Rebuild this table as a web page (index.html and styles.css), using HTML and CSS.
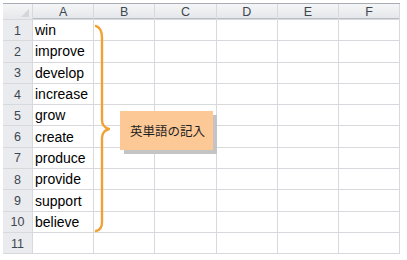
FILE: index.html
```html
<!DOCTYPE html>
<html lang="ja">
<head>
<meta charset="utf-8">
<link rel="stylesheet" href="styles.css">
</head>
<body>
<div class="wrap">
  <div class="sheet">
    <div class="corner"><span class="tri"></span></div>
    <div class="colh">A</div><div class="colh">B</div><div class="colh">C</div><div class="colh">D</div><div class="colh">E</div><div class="colh">F</div>

    <div class="rowh">1</div><div class="cell">win</div><div class="cell"></div><div class="cell"></div><div class="cell"></div><div class="cell"></div><div class="cell"></div>
    <div class="rowh">2</div><div class="cell">improve</div><div class="cell"></div><div class="cell"></div><div class="cell"></div><div class="cell"></div><div class="cell"></div>
    <div class="rowh">3</div><div class="cell">develop</div><div class="cell"></div><div class="cell"></div><div class="cell"></div><div class="cell"></div><div class="cell"></div>
    <div class="rowh">4</div><div class="cell">increase</div><div class="cell"></div><div class="cell"></div><div class="cell"></div><div class="cell"></div><div class="cell"></div>
    <div class="rowh">5</div><div class="cell">grow</div><div class="cell"></div><div class="cell"></div><div class="cell"></div><div class="cell"></div><div class="cell"></div>
    <div class="rowh">6</div><div class="cell">create</div><div class="cell"></div><div class="cell"></div><div class="cell"></div><div class="cell"></div><div class="cell"></div>
    <div class="rowh">7</div><div class="cell">produce</div><div class="cell"></div><div class="cell"></div><div class="cell"></div><div class="cell"></div><div class="cell"></div>
    <div class="rowh">8</div><div class="cell">provide</div><div class="cell"></div><div class="cell"></div><div class="cell"></div><div class="cell"></div><div class="cell"></div>
    <div class="rowh">9</div><div class="cell">support</div><div class="cell"></div><div class="cell"></div><div class="cell"></div><div class="cell"></div><div class="cell"></div>
    <div class="rowh">10</div><div class="cell">believe</div><div class="cell"></div><div class="cell"></div><div class="cell"></div><div class="cell"></div><div class="cell"></div>
    <div class="rowh">11</div><div class="cell"></div><div class="cell"></div><div class="cell"></div><div class="cell"></div><div class="cell"></div><div class="cell"></div>
  </div>

  <svg class="brace" width="20" height="214" viewBox="90 22 20 214">
    <path d="M96 26 Q102 28 102 38 L102 120 Q102 127 109 129 Q102 131 102 138 L102 222 Q102 230 96 231" fill="none" stroke="#F0A334" stroke-width="2.4" stroke-linecap="round" stroke-linejoin="round"/>
  </svg>

  <div class="note">英単語の記入</div>
</div>
</body>
</html>
```

FILE: styles.css
```css
html, body {
  margin: 0;
  padding: 0;
  background: #ffffff;
}

.wrap {
  position: relative;
  width: 407px;
  height: 260px;
  overflow: hidden;
}

.sheet {
  margin: 3px 0 0 3px;
  width: 397px;
  display: grid;
  grid-template-columns: 29px repeat(6, 60.2px);
  grid-template-rows: 15px repeat(11, 20.3px);
  gap: 1px;
  background: #d7d9dc;
  border-top: 1px solid #a9adb3;
  border-bottom: 1px solid #d7d9dc;
  font-family: "Liberation Sans", Arial, sans-serif;
}

.corner {
  position: relative;
  background: linear-gradient(#f4f5f6, #e6e8eb);
}

.tri {
  position: absolute;
  right: 3px;
  bottom: 2px;
  width: 0;
  height: 0;
  border-left: 8px solid transparent;
  border-bottom: 8px solid #d3d6da;
}

.colh {
  background: linear-gradient(#f4f5f6, #e4e7ea);
  color: #3e4650;
  font-size: 12.5px;
  display: flex;
  align-items: center;
  justify-content: center;
  box-shadow: inset 0 -1px 0 #b9bec5;
}

.rowh {
  background: #e9ebee;
  color: #3e4650;
  font-size: 12.5px;
  display: flex;
  align-items: center;
  justify-content: center;
  padding-top: 1px;
}

.cell {
  background: #ffffff;
  color: #000000;
  font-size: 14px;
  display: flex;
  align-items: center;
  padding-left: 2px;
  white-space: nowrap;
}

.brace {
  position: absolute;
  left: 90px;
  top: 22px;
}

.note {
  position: absolute;
  left: 120px;
  top: 111px;
  width: 93px;
  height: 39px;
  background: #fcc896;
  box-shadow: 4px 4px 0 #c4c4c4;
  color: #1e1e1e;
  font-family: "Noto Sans CJK JP", "Noto Sans", sans-serif;
  font-size: 12.5px;
  display: flex;
  align-items: center;
  justify-content: center;
  padding-left: 2px;
  box-sizing: border-box;
}
```
